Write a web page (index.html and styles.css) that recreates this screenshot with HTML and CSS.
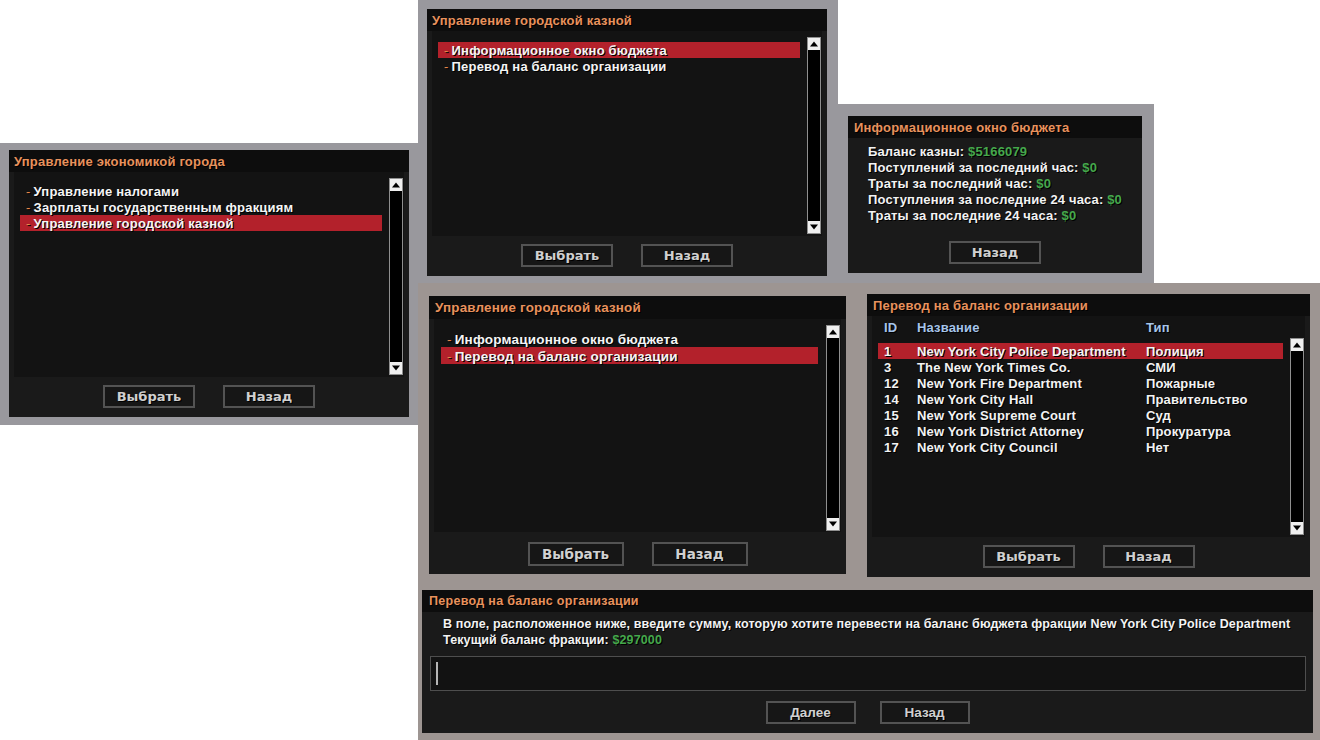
FILE: index.html
```html
<!DOCTYPE html>
<html lang="ru">
<head>
<meta charset="utf-8">
<title>Управление казной — диалоги</title>
<link rel="stylesheet" href="styles.css">
</head>
<body>
<main class="desk">

  <section class="shot cool s1">
    <div class="dlg d-menu">
      <header class="dlg-title">Управление экономикой города</header>
      <div class="list">
        <ul class="items">
          <li class="item"><span class="dash">-</span>Управление налогами</li>
          <li class="item"><span class="dash">-</span>Зарплаты государственным фракциям</li>
          <li class="item sel"><span class="dash">-</span>Управление городской казной</li>
        </ul>
        <div class="scroll">
          <span class="arr"><svg viewBox="0 0 12 12"><path d="M6 3.5L10 8.5H2Z"/></svg></span>
          <span class="track"></span>
          <span class="arr"><svg viewBox="0 0 12 12"><path d="M6 8.5L10 3.5H2Z"/></svg></span>
        </div>
      </div>
      <div class="btns"><span class="btn">Выбрать</span><span class="btn">Назад</span></div>
    </div>
  </section>

  <section class="shot cool s2">
    <div class="dlg d-menu">
      <header class="dlg-title">Управление городской казной</header>
      <div class="list">
        <ul class="items">
          <li class="item sel"><span class="dash">-</span>Информационное окно бюджета</li>
          <li class="item"><span class="dash">-</span>Перевод на баланс организации</li>
        </ul>
        <div class="scroll">
          <span class="arr"><svg viewBox="0 0 12 12"><path d="M6 3.5L10 8.5H2Z"/></svg></span>
          <span class="track"></span>
          <span class="arr"><svg viewBox="0 0 12 12"><path d="M6 8.5L10 3.5H2Z"/></svg></span>
        </div>
      </div>
      <div class="btns"><span class="btn">Выбрать</span><span class="btn">Назад</span></div>
    </div>
  </section>

  <section class="shot cool s3">
    <div class="dlg d-info">
      <header class="dlg-title t-info">Информационное окно бюджета</header>
      <div class="info">
        <p>Баланс казны: <span class="money">$5166079</span></p>
        <p>Поступлений за последний час: <span class="money">$0</span></p>
        <p>Траты за последний час: <span class="money">$0</span></p>
        <p>Поступления за последние 24 часа: <span class="money">$0</span></p>
        <p>Траты за последние 24 часа: <span class="money">$0</span></p>
      </div>
      <div class="btns btns-end"><span class="btn">Назад</span></div>
    </div>
  </section>

  <section class="shot warm s4">
    <div class="dlg d-menu-lg">
      <header class="dlg-title">Управление городской казной</header>
      <div class="list">
        <ul class="items">
          <li class="item"><span class="dash">-</span>Информационное окно бюджета</li>
          <li class="item sel"><span class="dash">-</span>Перевод на баланс организации</li>
        </ul>
        <div class="scroll">
          <span class="arr"><svg viewBox="0 0 12 12"><path d="M6 3.5L10 8.5H2Z"/></svg></span>
          <span class="track"></span>
          <span class="arr"><svg viewBox="0 0 12 12"><path d="M6 8.5L10 3.5H2Z"/></svg></span>
        </div>
      </div>
      <div class="btns"><span class="btn">Выбрать</span><span class="btn">Назад</span></div>
    </div>
  </section>

  <section class="shot warm s5">
    <div class="dlg d-table">
      <header class="dlg-title">Перевод на баланс организации</header>
      <div class="list">
        <div class="table">
          <div class="trow thead"><span class="c-id">ID</span><span class="c-name">Название</span><span class="c-type">Тип</span></div>
          <div class="trow sel"><span class="c-id">1</span><span class="c-name">New York City Police Department</span><span class="c-type">Полиция</span></div>
          <div class="trow"><span class="c-id">3</span><span class="c-name">The New York Times Co.</span><span class="c-type">СМИ</span></div>
          <div class="trow"><span class="c-id">12</span><span class="c-name">New York Fire Department</span><span class="c-type">Пожарные</span></div>
          <div class="trow"><span class="c-id">14</span><span class="c-name">New York City Hall</span><span class="c-type">Правительство</span></div>
          <div class="trow"><span class="c-id">15</span><span class="c-name">New York Supreme Court</span><span class="c-type">Суд</span></div>
          <div class="trow"><span class="c-id">16</span><span class="c-name">New York District Attorney</span><span class="c-type">Прокуратура</span></div>
          <div class="trow"><span class="c-id">17</span><span class="c-name">New York City Council</span><span class="c-type">Нет</span></div>
        </div>
        <div class="scroll">
          <span class="arr"><svg viewBox="0 0 12 12"><path d="M6 3.5L10 8.5H2Z"/></svg></span>
          <span class="track"></span>
          <span class="arr"><svg viewBox="0 0 12 12"><path d="M6 8.5L10 3.5H2Z"/></svg></span>
        </div>
      </div>
      <div class="btns"><span class="btn">Выбрать</span><span class="btn">Назад</span></div>
    </div>
  </section>

  <section class="shot warm s6">
    <div class="dlg d-input">
      <header class="dlg-title t-narrow">Перевод на баланс организации</header>
      <div class="msg">
        <p>В поле, расположенное ниже, введите сумму, которую хотите перевести на баланс бюджета фракции New York City Police Department</p>
        <p>Текущий баланс фракции: <span class="money">$297000</span></p>
      </div>
      <div class="field"><span class="caret"></span></div>
      <div class="btns btns-input"><span class="btn">Далее</span><span class="btn">Назад</span></div>
    </div>
  </section>

</main>
</body>
</html>
```

FILE: styles.css
```css
* { box-sizing: border-box; margin: 0; padding: 0; }

html, body {
  width: 1320px;
  height: 740px;
  background: #ffffff;
  overflow: hidden;
}

body {
  font-family: "Liberation Sans", Arial, sans-serif;
  font-weight: bold;
}

.desk {
  position: relative;
  width: 1320px;
  height: 740px;
}

/* screenshot frames placed on the free canvas */
.shot { position: absolute; }
.cool { background: #99989d; }
.warm { background: #9d9592; }

.s1 { left: 0; top: 143px; padding: 7px 9px 8px 9px; }
.s2 { left: 418px; top: 0; padding: 9px 11px 7px 9px; }
.s3 { left: 836px; top: 104px; padding: 12px 12px 10px 12px; }
.s4 { left: 418px; top: 283px; padding: 13px 12px 11px 11px; }
.s5 { left: 858px; top: 283px; padding: 11px 10px 8px 9px; }
.s6 { left: 418px; top: 585px; padding: 5px 7px 7px 4px; }

/* dialog */
.dlg {
  display: flex;
  flex-direction: column;
  background: #1a1a1a;
}

.dlg-title {
  flex: none;
  height: 22px;
  line-height: 23px;
  padding-left: 5px;
  background: #0d0d0d;
  color: #e8925d;
  font-size: 13px;
  letter-spacing: 0.2px;
  white-space: nowrap;
  text-shadow: 1px 1px 0 #000;
}

.t-info { padding-left: 6px; }

.d-menu { width: 400px; height: 267px; }
.d-menu-lg { width: 417px; height: 278px; }
.d-info { width: 294px; height: 157px; }
.d-table { width: 443px; height: 283px; }
.d-input { width: 891px; height: 143px; }

.list {
  flex: none;
  display: flex;
  height: 205px;
  margin: 0 5px;
  background: #131313;
}

.items {
  list-style: none;
  width: 362px;
  margin: 11px 0 0 6px;
}

.item {
  height: 16px;
  line-height: 17px;
  color: #f5f5f5;
  font-size: 13px;
  letter-spacing: 0.2px;
  white-space: nowrap;
  text-shadow: 1px 1px 0 #000;
}

.sel { background: #b3212b; }

.dash {
  color: #e5894d;
  font-weight: normal;
  padding: 0 3px 0 6px;
}

/* scrollbar */
.scroll {
  flex: none;
  width: 14px;
  margin: 6px 1px 2px 7px;
  display: flex;
  flex-direction: column;
  background: #000;
  border: 1px solid #8f8f8f;
}

.arr {
  flex: none;
  height: 12px;
  background: #f0f0f0;
  display: flex;
}

.arr svg { width: 12px; height: 12px; fill: #000; }

.track { flex: 1; }

/* buttons */
.btns {
  flex: none;
  display: flex;
  justify-content: center;
  gap: 28px;
  margin-top: 8px;
}

.btns-end { margin-top: auto; margin-bottom: 9px; }

.btn {
  width: 92px;
  height: 23px;
  display: flex;
  align-items: center;
  justify-content: center;
  border: 2px solid #535353;
  background: #161616;
  color: #d0d0d0;
  font-family: "DejaVu Sans", sans-serif;
  font-size: 13px;
  text-shadow: 1px 1px 0 #000;
}

/* larger menu (panel 4) */
.d-menu-lg .dlg-title { height: 23px; line-height: 24px; padding-left: 6px; font-size: 13.4px; }
.d-menu-lg .list { height: 213px; }
.d-menu-lg .items { width: 377px; margin: 11px 0 0 7px; }
.d-menu-lg .item { height: 17px; line-height: 19px; font-size: 13.5px; }
.d-menu-lg .scroll { margin: 6px 1px 1px 8px; }
.d-menu-lg .btns { margin-top: 10px; }
.d-menu-lg .btn { width: 96px; height: 24px; font-size: 13.5px; }

/* info window */
.info {
  padding: 6px 0 0 20px;
  font-size: 13px;
  letter-spacing: 0.15px;
  line-height: 16px;
  color: #f3f3f3;
  text-shadow: 1px 1px 0 #000;
  white-space: nowrap;
}

.money { color: #45a84c; }

/* table list (panel 5) */
.d-table .dlg-title { padding-left: 6px; }
.d-table .list { height: 221px; }

.table {
  width: 405px;
  margin-left: 6px;
  font-size: 13px;
  letter-spacing: 0.15px;
  color: #f3f3f3;
  text-shadow: 1px 1px 0 #000;
}

.trow {
  display: flex;
  height: 16px;
  line-height: 17px;
  white-space: nowrap;
}

.thead {
  margin: 3px 0 8px;
  color: #a6c4ea;
}

.c-id { width: 39px; padding-left: 6px; }
.c-name { width: 229px; }
.c-type { flex: 1; }

.d-table .scroll { margin: 22px 1px 2px 7px; }

/* input dialog (panel 6) */
.t-narrow {
  padding-left: 7px;
  font-size: 12.5px;
  letter-spacing: 0.3px;
}

.msg {
  padding: 4px 0 0 21px;
  font-size: 12.5px;
  letter-spacing: 0.12px;
  line-height: 16px;
  color: #f3f3f3;
  text-shadow: 1px 1px 0 #000;
  white-space: nowrap;
}

.field {
  flex: none;
  height: 35px;
  margin: 8px 7px 0 8px;
  border: 1px solid #4e4e4e;
  background: #121212;
  display: flex;
  align-items: center;
  padding-left: 5px;
}

.caret {
  width: 2px;
  height: 23px;
  background: #b5b5b5;
}

.btns-input { margin-top: 10px; gap: 24px; }
.btns-input .btn {
  width: 90px;
  font-family: "Liberation Sans", Arial, sans-serif;
  font-size: 13.5px;
}
```
